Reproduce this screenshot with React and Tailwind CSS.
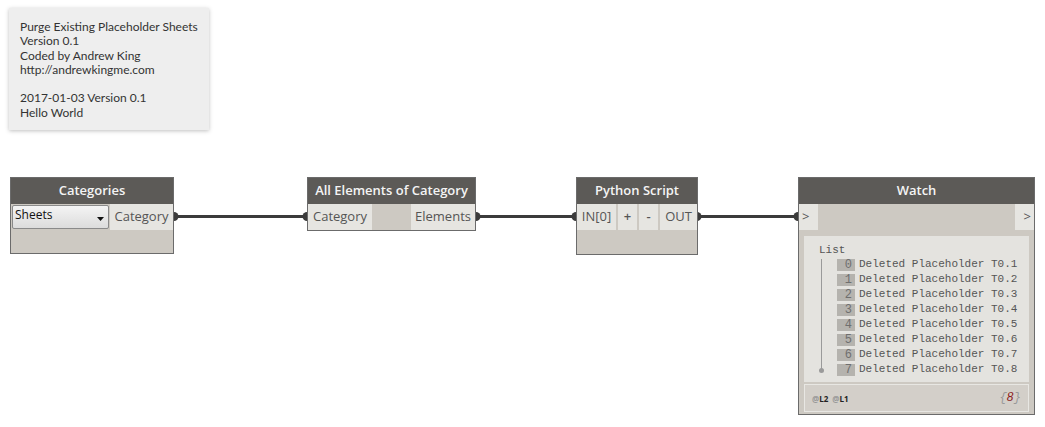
const UI = { fontFamily: '"Open Sans", "Noto Sans", sans-serif' };
const NOTE = { fontFamily: 'Lato, "Open Sans", sans-serif' };
const MONO = { fontFamily: '"Liberation Mono", "DejaVu Sans Mono", monospace' };

const items = [
  'Deleted Placeholder T0.1',
  'Deleted Placeholder T0.2',
  'Deleted Placeholder T0.3',
  'Deleted Placeholder T0.4',
  'Deleted Placeholder T0.5',
  'Deleted Placeholder T0.6',
  'Deleted Placeholder T0.7',
  'Deleted Placeholder T0.8',
];

const Header = ({ title }) => (
  <div className="h-[26px] bg-[#5c5a57] text-[#f4f4f4] text-[13px] font-semibold flex items-center justify-center">
    {title}
  </div>
);

const Port = ({ children, className = '' }) => (
  <div className={`h-[26px] bg-[#e6e5e1] text-[#555] text-[13px] flex items-center px-[3px] ${className}`}>
    {children}
  </div>
);

const Wires = () => (
  <svg className="absolute left-0 top-0" width="1045" height="427">
    <g stroke="#3b3b3b" strokeWidth="3" fill="none">
      <line x1="175" y1="216.5" x2="306" y2="216.5" />
      <line x1="477" y1="216.5" x2="575" y2="216.5" />
      <line x1="698" y1="216.5" x2="797" y2="216.5" />
    </g>
    <g fill="#3b3b3b">
      <path d="M174 212 a4.5 4.5 0 0 1 0 9 z" />
      <path d="M307 212 a4.5 4.5 0 0 0 0 9 z" />
      <path d="M476 212 a4.5 4.5 0 0 1 0 9 z" />
      <path d="M576 212 a4.5 4.5 0 0 0 0 9 z" />
      <path d="M697 212 a4.5 4.5 0 0 1 0 9 z" />
      <path d="M798 212 a4.5 4.5 0 0 0 0 9 z" />
    </g>
  </svg>
);

export default function App() {
  return (
    <div className="relative w-[1045px] h-[427px] bg-white overflow-hidden" style={UI}>
      <Wires />

      {/* note */}
      <div
        className="absolute left-[9px] top-[8px] w-[200px] h-[122px] bg-[#eeeeee] shadow-[0_1px_4px_rgba(0,0,0,0.25)] px-[11px] pt-[12px] text-[12px] leading-[14.3px] text-[#333] whitespace-nowrap"
        style={NOTE}
      >
        <div>Purge Existing Placeholder Sheets</div>
        <div>Version 0.1</div>
        <div>Coded by Andrew King</div>
        <div>http://andrewkingme.com</div>
        <div>&nbsp;</div>
        <div>2017-01-03 Version 0.1</div>
        <div>Hello World</div>
      </div>

      {/* Categories */}
      <div className="absolute left-[10px] top-[177px] w-[164px] border border-[#6b6b6b] bg-[#cdc9c2]">
        <Header title="Categories" />
        <div className="flex h-[26px]">
          <div className="w-[99px] flex items-center px-[1px]">
            <div className="w-[98px] h-[24px] rounded-[2px] border border-[#8a8a8a] bg-gradient-to-b from-[#f4f4f4] to-[#dcdcdc] flex items-center justify-between pl-[2px] pr-[3px] text-[12px] text-[#111]">
              <span className="-mt-[4px]">Sheets</span>
              <svg width="8" height="5" viewBox="0 0 8 5" className="mt-[4px]"><path d="M0 0h7L3.5 4z" fill="#111" /></svg>
            </div>
          </div>
          <Port className="flex-1 justify-center">Category</Port>
        </div>
        <div className="h-[23px]" />
      </div>

      {/* All Elements of Category */}
      <div className="absolute left-[307px] top-[177px] w-[169px] border border-[#6b6b6b] bg-[#cdc9c2]">
        <Header title="All Elements of Category" />
        <div className="flex h-[26px]">
          <Port className="w-[64px] justify-center">Category</Port>
          <div className="flex-1" />
          <Port className="w-[64px] justify-center">Elements</Port>
        </div>
      </div>

      {/* Python Script */}
      <div className="absolute left-[576px] top-[177px] w-[122px] border border-[#6b6b6b] bg-[#cdc9c2]">
        <Header title="Python Script" />
        <div className="flex h-[26px] gap-[2px]">
          <Port className="w-[39px] justify-center">IN[0]</Port>
          <Port className="w-[19px] justify-center text-[12px] font-semibold text-[#333]">+</Port>
          <Port className="w-[19px] justify-center text-[12px] font-semibold text-[#333]">-</Port>
          <Port className="flex-1 justify-center">OUT</Port>
        </div>
        <div className="h-[24px]" />
      </div>

      {/* Watch */}
      <div className="absolute left-[798px] top-[177px] w-[237px] h-[238px] border border-[#6b6b6b] bg-[#cdc9c2]">
        <Header title="Watch" />
        <div className="flex justify-between h-[25px]">
          <Port className="w-[19px] text-[11px] text-[#555]">&gt;</Port>
          <Port className="w-[19px] justify-end text-[11px] text-[#555]">&gt;</Port>
        </div>
        <div className="mx-[5px] mt-[7px] bg-[#e4e3df]">
          <div className="h-[146px] pl-[15px] pt-[7px] text-[11px] text-[#555]" style={MONO}>
            <div className="leading-[14px]">List</div>
            <div className="flex">
              <div className="relative w-[18px]">
                <div className="absolute left-[2px] top-[2px] w-px h-[111px] bg-[#9a9a9a]" />
                <div className="absolute left-0 top-[111px] w-[5px] h-[5px] rounded-full bg-[#9a9a9a]" />
              </div>
              <div className="flex flex-col">
                {items.map((t, i) => (
                  <div key={t} className="flex items-center h-[15px]">
                    <span className="w-[18px] h-[12px] bg-[#b5b3ae] text-[#6f6f6f] text-[12px] text-right pr-[3px] leading-[12px]">{i}</span>
                    <span className="ml-[4px]">{t}</span>
                  </div>
                ))}
              </div>
            </div>
          </div>
          <div className="h-[2px] bg-[#cdc9c2]" />
          <div className="h-[28px] border border-[#e8e7e3] bg-[#d3cfc9] flex items-center justify-between px-[7px]">
            <span className="text-[8px] font-bold text-[#222] pt-[2px] flex gap-[4px]" style={UI}>
              <span><span className="text-[#999]">@</span>L2</span>
              <span><span className="text-[#999]">@</span>L1</span>
            </span>
            <span className="text-[12px] italic text-[#999]" style={MONO}>
              {'{'}<span className="text-[#8b1a1a]">8</span>{'}'}
            </span>
          </div>
        </div>
      </div>
    </div>
  );
}
